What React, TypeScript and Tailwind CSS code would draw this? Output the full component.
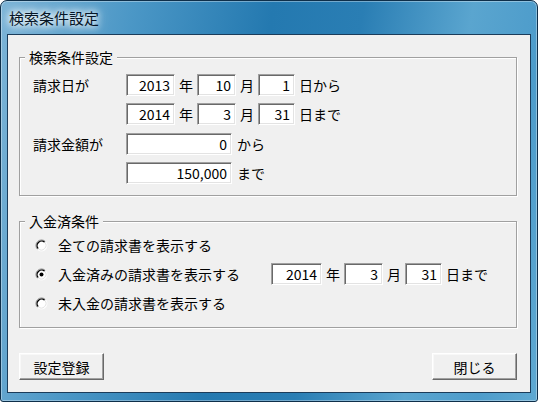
import type { ReactNode } from 'react';

// classic sunken edit box
function Field({ value, w }: { value: string; w: string }) {
  return (
    <div
      className={`${w} h-[22px] flex items-center justify-end pr-[4px] bg-white border border-t-[#a0a0a0] border-l-[#a0a0a0] border-b-white border-r-white shadow-[inset_1px_1px_0_#696969,inset_-1px_-1px_0_#e3e3e3] text-[14px] leading-none text-black`}
    >
      {value}
    </div>
  );
}

function Radio({ checked }: { checked?: boolean }) {
  return (
    <svg width="13" height="13" viewBox="0 0 13 13" className="shrink-0">
      <circle cx="6.5" cy="6.5" r="5.5" fill="#fff" />
      <path d="M2.61 10.39 A5.5 5.5 0 0 1 10.39 2.61" stroke="#808080" fill="none" />
      <path d="M3.32 9.68 A4.5 4.5 0 0 1 9.68 3.32" stroke="#000" strokeWidth="1.3" fill="none" />
      <path d="M10.39 2.61 A5.5 5.5 0 0 1 2.61 10.39" stroke="#ffffff" fill="none" />
      <path d="M9.68 3.32 A4.5 4.5 0 0 1 3.32 9.68" stroke="#e3e3e3" fill="none" />
      {checked && <circle cx="6.5" cy="6.5" r="2" fill="#000" />}
    </svg>
  );
}

function Group({ title, className, children }: { title: string; className: string; children: ReactNode }) {
  return (
    <fieldset
      className={`m-0 p-0 border border-[#a0a0a0] shadow-[inset_1px_1px_0_#fff,1px_1px_0_#fff] ${className}`}
    >
      <legend className="ml-[5px] px-[4px] leading-[16px] bg-[#f0f0f0] text-[14px]">{title}</legend>
      {children}
    </fieldset>
  );
}

function Button({ children }: { children: ReactNode }) {
  return (
    <button
      type="button"
      className="w-[85px] h-[27px] flex items-center justify-center bg-[#f0f0f0] border border-t-white border-l-white border-b-[#696969] border-r-[#696969] shadow-[inset_-1px_-1px_0_#a0a0a0,inset_1px_1px_0_#f8f8f8] text-[14px] leading-none text-black"
    >
      {children}
    </button>
  );
}

export default function App() {
  return (
    <div className="w-[538px] h-[402px] flex flex-col rounded-t-[7px] rounded-b-[3px] border border-[#0e2f4a] bg-[linear-gradient(100deg,#7cb4d7_0%,#4b97c6_22%,#2479b0_45%,#2a7eb4_60%,#5aa5cf_78%,#4d9ccb_90%,#5fa9d2_100%)] shadow-[inset_0_0_0_1px_rgba(255,255,255,0.35)] font-['Noto_Sans_CJK_JP',sans-serif] text-black select-none">
      {/* title bar */}
      <div className="h-[33px] flex items-center pl-[8px]">
        <span className="text-[15px] leading-none text-[#061527] [text-shadow:0_0_6px_#fff,0_0_10px_#fff,0_0_14px_rgba(255,255,255,0.8)]">
          検索条件設定
        </span>
      </div>

      {/* client area */}
      <div className="flex-1 mx-[6px] mb-[8px] border border-[#1b3c5a] bg-[#f0f0f0] pl-[11px] pr-[13px] pt-[14px] flex flex-col text-[14px]">
        <Group title="検索条件設定" className="pt-[9px] pb-[11px]">
          <div className="flex flex-col gap-[7px] pl-[13px]">
            <div className="flex items-center h-[22px] gap-[4px]">
              <span className="w-[89px]">請求日が</span>
              <Field value="2013" w="w-[49px]" />
              <span>年</span>
              <Field value="10" w="w-[39px]" />
              <span>月</span>
              <Field value="1" w="w-[37px]" />
              <span>日から</span>
            </div>
            <div className="flex items-center h-[22px] gap-[4px]">
              <span className="w-[89px]" />
              <Field value="2014" w="w-[49px]" />
              <span>年</span>
              <Field value="3" w="w-[39px]" />
              <span>月</span>
              <Field value="31" w="w-[37px]" />
              <span>日まで</span>
            </div>
            <div className="flex items-center h-[22px] gap-[5px] mt-[1px]">
              <span className="w-[88px]">請求金額が</span>
              <Field value="0" w="w-[106px]" />
              <span>から</span>
            </div>
            <div className="flex items-center h-[22px] gap-[5px]">
              <span className="w-[88px]" />
              <Field value="150,000" w="w-[106px]" />
              <span>まで</span>
            </div>
          </div>
        </Group>

        <Group title="入金済条件" className="mt-[17px] pt-[5px] pb-[13px]">
          <div className="flex flex-col gap-[7px] pl-[15px]">
            <div className="flex items-center h-[22px]">
              <Radio />
              <span className="ml-[10px]">全ての請求書を表示する</span>
            </div>
            <div className="flex items-center h-[22px] gap-[4px]">
              <Radio checked />
              <span className="ml-[6px] w-[209px]">入金済みの請求書を表示する</span>
              <Field value="2014" w="w-[51px]" />
              <span>年</span>
              <Field value="3" w="w-[39px]" />
              <span>月</span>
              <Field value="31" w="w-[37px]" />
              <span>日まで</span>
            </div>
            <div className="flex items-center h-[22px]">
              <Radio />
              <span className="ml-[10px]">未入金の請求書を表示する</span>
            </div>
          </div>
        </Group>

        <div className="flex justify-between mt-[25px]">
          <Button>設定登録</Button>
          <Button>閉じる</Button>
        </div>
      </div>
    </div>
  );
}
